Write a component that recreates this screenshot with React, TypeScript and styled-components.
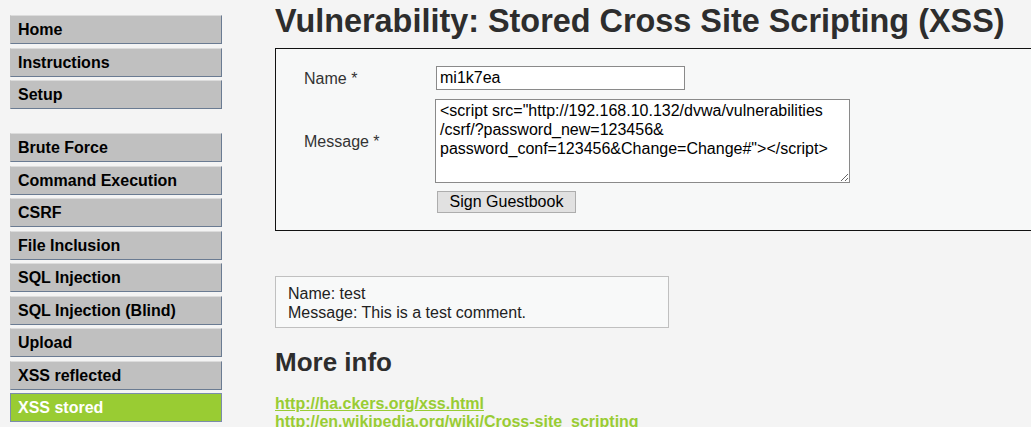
import React from "react";
import styled, { createGlobalStyle } from "styled-components";

const Global = createGlobalStyle`
  html, body {
    margin: 0;
    padding: 0;
    background: #f4f4f4;
    overflow: hidden;
    font-family: "Liberation Sans", Arial, sans-serif;
    color: #2b2b2b;
  }
`;

const Page = styled.div`
  display: flex;
  align-items: flex-start;
  gap: 53px;
  padding-left: 10px;
  width: 1400px;
`;

const Menu = styled.ul`
  list-style: none;
  margin: 15px 0 0 0;
  padding: 0;
  width: 212px;
  flex: none;
`;

const MenuItem = styled.li<{ $spaced?: boolean }>`
  margin: ${(p) => (p.$spaced ? "24px" : "0")} 0 3.5px 0;
`;

const MenuLink = styled.a<{ $selected?: boolean }>`
  display: block;
  box-sizing: border-box;
  height: 29px;
  line-height: 28px;
  padding-left: 7px;
  font-size: 16px;
  font-weight: bold;
  text-decoration: none;
  cursor: pointer;
  color: ${(p) => (p.$selected ? "#ffffff" : "#000000")};
  background: ${(p) => (p.$selected ? "#99cc33" : "#c0c0c0")};
  border-top: 1px solid ${(p) => (p.$selected ? "#7b8cab" : "#dcdcdc")};
  border-bottom: 1px solid ${(p) => (p.$selected ? "#7b8cab" : "#6a7b92")};
  border-right: 1px solid ${(p) => (p.$selected ? "#7b8cab" : "#6a7b92")};
  border-left: 1px solid ${(p) => (p.$selected ? "#7b8cab" : "#c0c0c0")};
`;

const Main = styled.div`
  flex: 1;
  display: flex;
  flex-direction: column;
  align-items: flex-start;
`;

const Title = styled.h1`
  margin: 0;
  font-size: 32.4px;
  line-height: 42px;
  font-weight: bold;
  color: #2d2d2d;
  white-space: nowrap;
`;

const FormBox = styled.form`
  margin-top: 6px;
  box-sizing: border-box;
  width: 900px;
  border: 1px solid #111;
  background: #f7f8f8;
  padding: 17px 0 17px 28px;
  display: grid;
  grid-template-columns: 132px auto;
  align-items: center;
  row-gap: 9px;
`;

const Label = styled.label`
  font-size: 16px;
  color: #333;
  padding-top: 2px;
`;

const TextInput = styled.input`
  box-sizing: border-box;
  width: 249px;
  height: 24px;
  margin: 0;
  padding: 0 3px;
  border: 1px solid #8a8a8a;
  background: #fff;
  font-family: "Liberation Sans", Arial, sans-serif;
  font-size: 16px;
  color: #000;
  justify-self: start;
`;

const MessageArea = styled.textarea`
  box-sizing: border-box;
  width: 415px;
  height: 84px;
  margin: 0 0 0 -1px;
  padding: 1px 4px;
  border: 1px solid #8a8a8a;
  background: #fff;
  font-family: "Liberation Sans", Arial, sans-serif;
  font-size: 16px;
  line-height: 19px;
  color: #000;
  overflow: hidden;
  justify-self: start;
`;

const Spacer = styled.div``;

const Button = styled.button`
  box-sizing: border-box;
  width: 139px;
  height: 22px;
  margin: -1px 0 0 1px;
  padding: 0;
  border: 1px solid #adadad;
  background: #e1e1e1;
  font-family: "Liberation Sans", Arial, sans-serif;
  font-size: 16px;
  color: #000;
  justify-self: start;
`;

const Comment = styled.div`
  margin-top: 45px;
  box-sizing: border-box;
  width: 394px;
  padding: 8px 12px 5px 12px;
  border: 1px solid #c0c0c0;
  background: #f8f9f9;
  font-size: 16px;
  line-height: 18.5px;
  color: #222;
`;

const SubTitle = styled.h2`
  margin: 19px 0 18px 0;
  font-size: 26px;
  line-height: 30px;
  font-weight: bold;
  color: #2d2d2d;
`;

const LinkList = styled.div`
  display: flex;
  flex-direction: column;
  font-size: 16px;
  line-height: 18.4px;
`;

const InfoLink = styled.a`
  color: #99cc33;
  font-weight: bold;
  text-decoration: underline;
`;

const topItems = ["Home", "Instructions", "Setup"];
const vulnItems = [
  "Brute Force",
  "Command Execution",
  "CSRF",
  "File Inclusion",
  "SQL Injection",
  "SQL Injection (Blind)",
  "Upload",
  "XSS reflected",
  "XSS stored",
];

const message =
  '<script src="http://192.168.10.132/dvwa/vulnerabilities\n/csrf/?password_new=123456&\npassword_conf=123456&Change=Change#"></script>';

export default function App() {
  return (
    <>
      <Global />
      <Page>
        <Menu>
          {topItems.map((t) => (
            <MenuItem key={t}>
              <MenuLink>{t}</MenuLink>
            </MenuItem>
          ))}
          {vulnItems.map((t, i) => (
            <MenuItem key={t} $spaced={i === 0}>
              <MenuLink $selected={t === "XSS stored"}>{t}</MenuLink>
            </MenuItem>
          ))}
        </Menu>
        <Main>
          <Title>Vulnerability: Stored Cross Site Scripting (XSS)</Title>
          <FormBox onSubmit={(e) => e.preventDefault()}>
            <Label>Name *</Label>
            <TextInput defaultValue="mi1k7ea" />
            <Label>Message *</Label>
            <MessageArea defaultValue={message} />
            <Spacer />
            <Button type="button">Sign Guestbook</Button>
          </FormBox>
          <Comment>
            Name: test
            <br />
            Message: This is a test comment.
          </Comment>
          <SubTitle>More info</SubTitle>
          <LinkList>
            <InfoLink href="#">http://ha.ckers.org/xss.html</InfoLink>
            <InfoLink href="#">http://en.wikipedia.org/wiki/Cross-site_scripting</InfoLink>
          </LinkList>
        </Main>
      </Page>
    </>
  );
}
